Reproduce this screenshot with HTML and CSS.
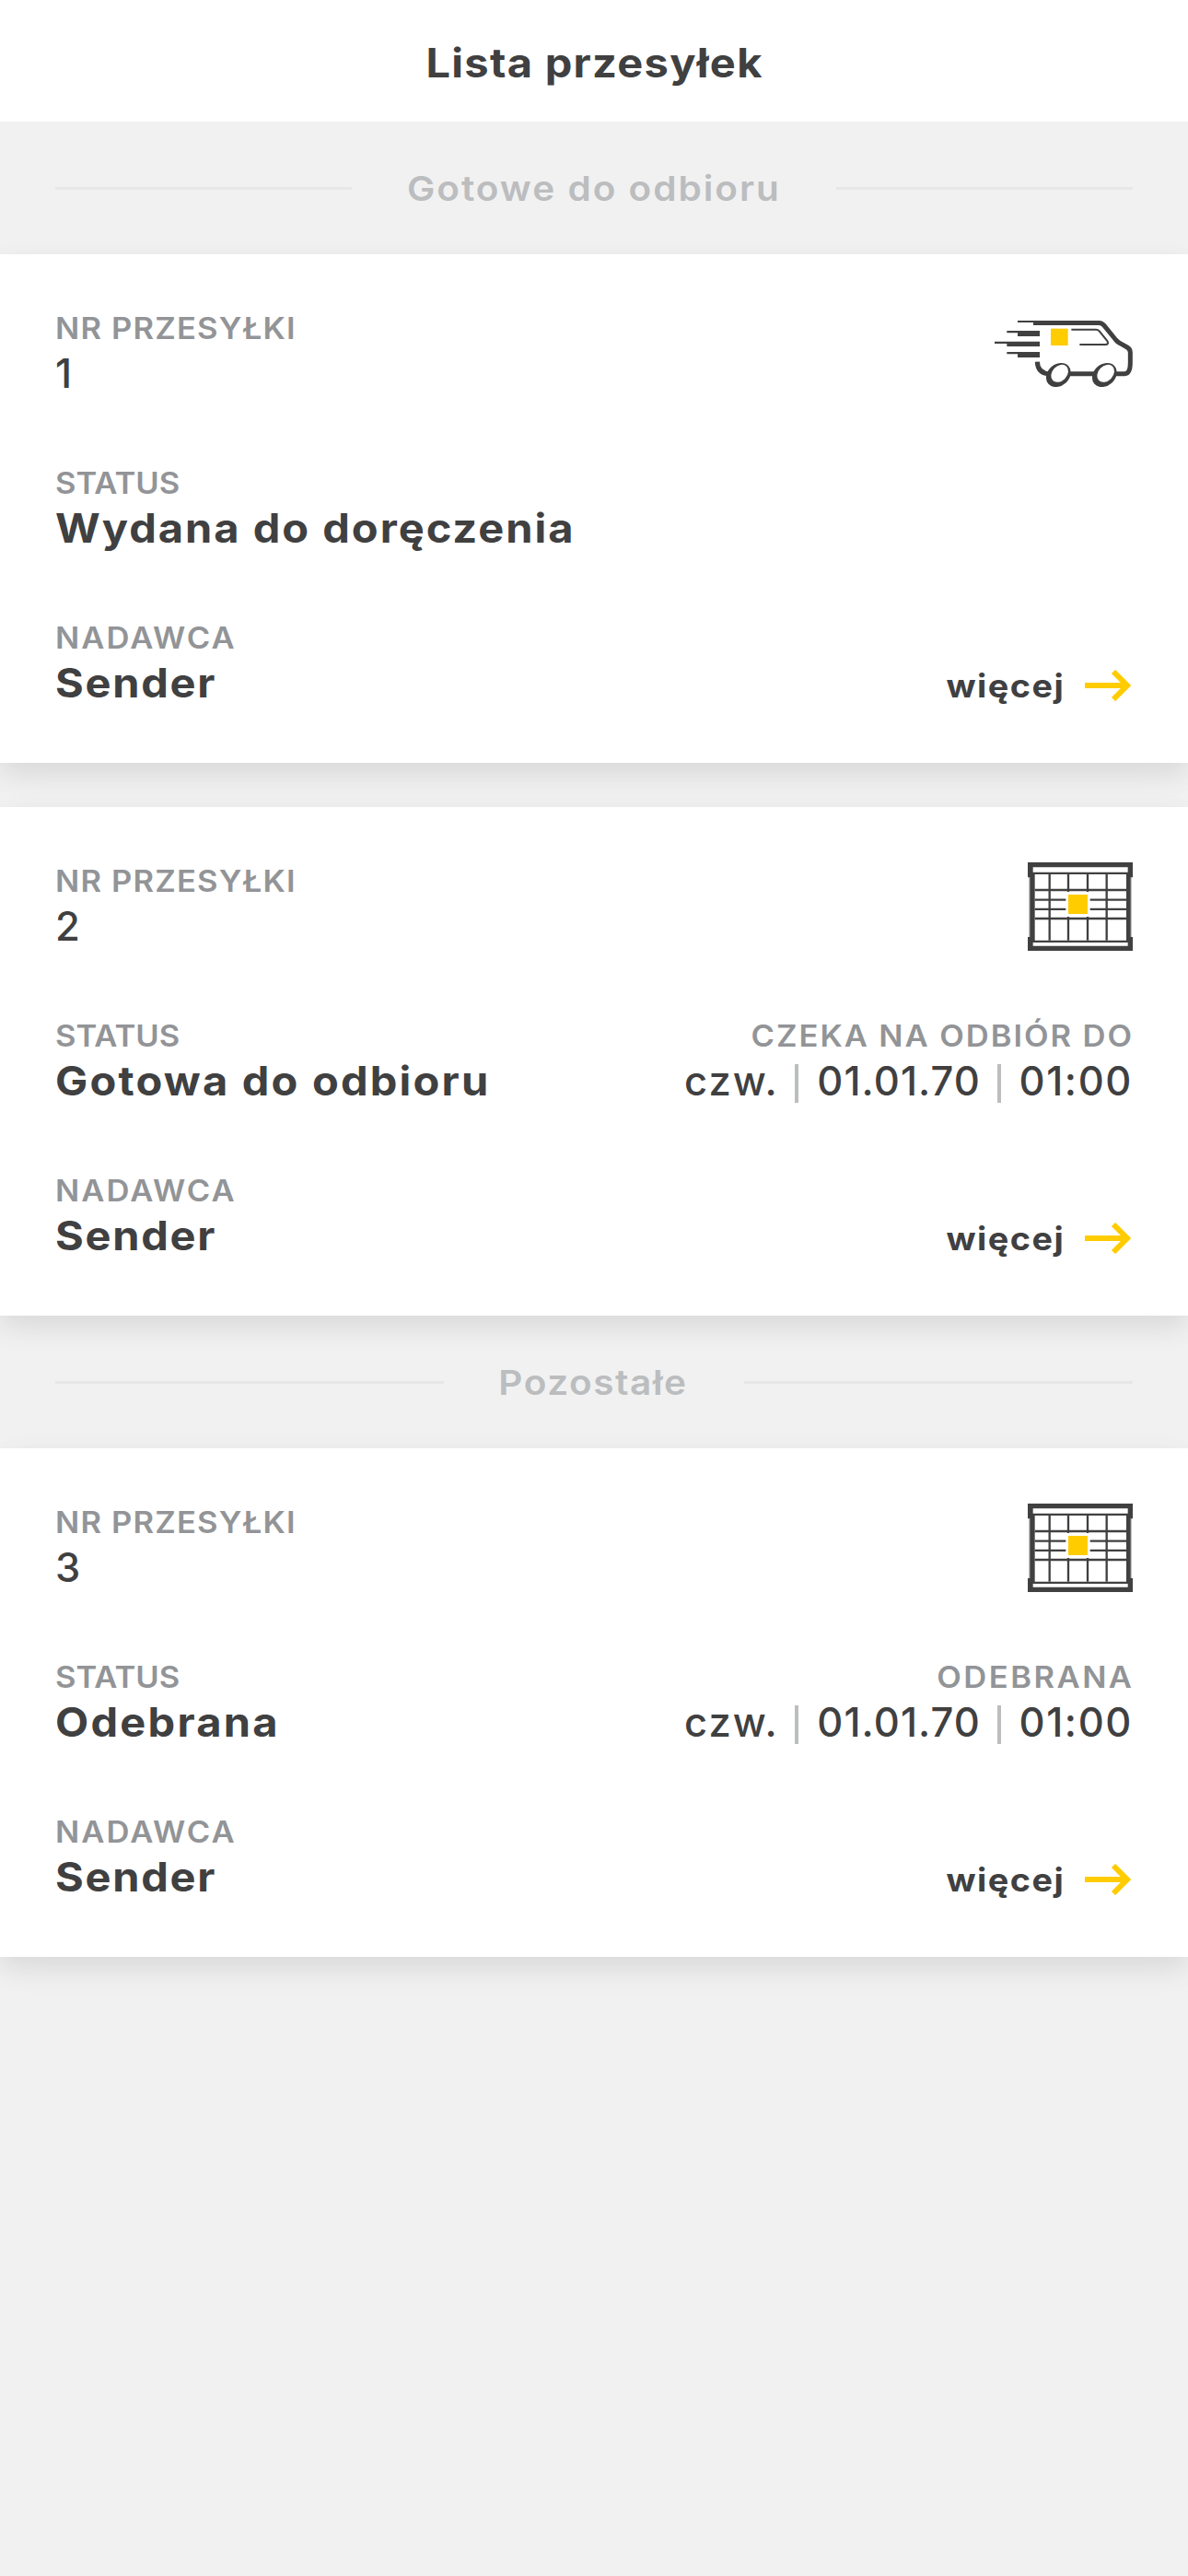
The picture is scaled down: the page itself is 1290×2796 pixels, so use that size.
FILE: index.html
```
<!DOCTYPE html>
<html lang="pl">
<head>
<meta charset="utf-8">
<title>Lista przesyłek</title>
<link rel="stylesheet" href="styles.css">
</head>
<body>
<svg class="sprite" aria-hidden="true">
  <symbol id="locker" viewBox="78 48 342 288">
    <path fill="#c4c4c5" d="M81 97h336v194H81z"/>
    <path fill="#404041" d="M78 48h342v49h-7v194h7v45H78v-45h7V97h-7z"/>
    <path fill="#fff" d="M95 64h309v16H95zM101 87h298v215H101zM95 309h309v11H95z"/>
    <path fill="none" stroke="#404041" stroke-width="7" d="M101 138h298M101 231h298M101 170h101M281 170h118M101 200.500h101M281 200.500h118M149 87v215M335 87v215M210 87v57M273 87v57M210 225v77M273 225v77"/>
    <path fill="#fc0" d="M210 153h63v63h-63z"/>
  </symbol>
  <symbol id="arrow" viewBox="534 81 150 102">
    <path fill="none" stroke="#fc0" stroke-width="18" d="M534 132h138M627 87l45 45-45 45"/>
  </symbol>
</svg>
<header class="topbar"><h1>Lista przesyłek</h1></header>
<main>
  <div class="section"><h2 class="ready">Gotowe do odbioru</h2></div>

  <article class="card">
    <div class="row">
      <div><div class="label number">NR PRZESYŁKI</div><div class="value plain">1</div></div>
      <svg class="van" viewBox="60 54 450 216">
        <g fill="#404041">
          <path d="M135 54h60v6h-60zM100 87h107v18h-72v-11h-35zM60 122h147v16H100v-9H60zM100 156h107v18h-72v-11h-35z"/>
          <ellipse cx="268" cy="231" rx="44" ry="35" transform="rotate(-42 268 231)"/>
          <ellipse cx="418" cy="231" rx="44" ry="35" transform="rotate(-42 418 231)"/>
        </g>
        <g fill="none" stroke="#404041">
          <path stroke-width="15" d="M186 61.500H400Q410 62 417 70L455 117Q461 124 469 128L492 141Q502 147 502 158V190Q502 227 484 227H452M199 188Q200 226 240 228M300 227h90"/>
          <path stroke-width="6" d="M310 83h80q7 0 11 5l26 32q6 12-6 12h-84"/>
        </g>
        <g fill="#fff">
          <ellipse cx="272" cy="226" rx="32" ry="24" transform="rotate(-46 272 226)"/>
          <ellipse cx="422" cy="226" rx="32" ry="24" transform="rotate(-46 422 226)"/>
        </g>
        <path fill="#fc0" d="M243 80h56v55h-56z"/>
      </svg>
    </div>
    <div class="row">
      <div><div class="label status">STATUS</div><div class="value out">Wydana do doręczenia</div></div>
    </div>
    <div class="row">
      <div><div class="label sender">NADAWCA</div><div class="value name">Sender</div></div>
      <a class="more"><span>więcej</span><svg><use href="#arrow"/></svg></a>
    </div>
  </article>

  <article class="card">
    <div class="row">
      <div><div class="label number">NR PRZESYŁKI</div><div class="value plain">2</div></div>
      <svg class="locker"><use href="#locker"/></svg>
    </div>
    <div class="row">
      <div><div class="label status">STATUS</div><div class="value pickup">Gotowa do odbioru</div></div>
      <div class="end">
        <div class="label until">CZEKA NA ODBIÓR DO</div>
        <div class="value when"><span class="day">czw.</span><i></i><span class="date">01.01.70</span><i></i><span class="time">01:00</span></div>
      </div>
    </div>
    <div class="row">
      <div><div class="label sender">NADAWCA</div><div class="value name">Sender</div></div>
      <a class="more"><span>więcej</span><svg><use href="#arrow"/></svg></a>
    </div>
  </article>

  <div class="section"><h2 class="rest">Pozostałe</h2></div>

  <article class="card">
    <div class="row">
      <div><div class="label number">NR PRZESYŁKI</div><div class="value plain">3</div></div>
      <svg class="locker"><use href="#locker"/></svg>
    </div>
    <div class="row">
      <div><div class="label status">STATUS</div><div class="value received">Odebrana</div></div>
      <div class="end">
        <div class="label taken">ODEBRANA</div>
        <div class="value when"><span class="day">czw.</span><i></i><span class="date">01.01.70</span><i></i><span class="time">01:00</span></div>
      </div>
    </div>
    <div class="row">
      <div><div class="label sender">NADAWCA</div><div class="value name">Sender</div></div>
      <a class="more"><span>więcej</span><svg><use href="#arrow"/></svg></a>
    </div>
  </article>
</main>
</body>
</html>
```
FILE: styles.css
```
* { box-sizing: border-box; margin: 0; }
body {
  min-height: 2796px;
  background: #f1f1f1;
  color: #404041;
  font-family: Inter, "Noto Sans", sans-serif;
  white-space: nowrap;
  overflow-x: hidden;
}
svg { display: block; flex: none; }
.sprite { display: none; }

/* Widened letterforms for headings, labels and values */
h1, h2, .label, .value, .more span { transform: scaleX(1.08); }
.label, .value { transform-origin: left; }
.end .label, .more span { transform-origin: right; }
.value.plain, .value.when { transform: none; }

.topbar {
  height: 132px;
  padding-top: 4px;
  background: #fff;
  display: flex;
  align-items: center;
  justify-content: center;
}
h1 { font-size: 43.5px; font-weight: 700; letter-spacing: 1.2px; margin-right: -1px; }

.section {
  height: 144px;
  padding: 1px 60px 0;
  display: flex;
  align-items: center;
}
.section::before, .section::after {
  content: "";
  flex: 1;
  height: 3px;
  background: #e7e7e8;
}
h2 { font-size: 37.5px; font-weight: 600; color: #bbbdbf; }
.ready { letter-spacing: 1.85px; padding: 0 76px 0 75px; }
.rest { letter-spacing: 1.45px; padding: 0 69px 0 67px; }

.card {
  height: 552px;
  padding: 60px;
  background: #fff;
  display: flex;
  flex-direction: column;
  gap: 71px;
  box-shadow: 0 12px 26px rgba(0, 0, 0, .075), 0 12px 45px rgba(0, 0, 0, .035);
}
.card + .card { margin-top: 48px; }
.row {
  height: 97px;
  display: flex;
  justify-content: space-between;
}
.label {
  font-size: 32px;
  line-height: 41px;
  font-weight: 600;
  color: #929497;
}
.value { font-size: 43.5px; line-height: 56px; font-weight: 700; }
.plain { font-weight: 500; }

.number { letter-spacing: 1.1px; }
.status { letter-spacing: 0; }
.sender { letter-spacing: 1.9px; }
.until { letter-spacing: 1.8px; margin-right: -1px; }
.taken { letter-spacing: 2.3px; margin-right: -1.5px; }
.out { letter-spacing: 1.85px; }
.pickup { letter-spacing: 2.05px; }
.name { letter-spacing: 1.6px; }
.received { letter-spacing: 2.1px; }

.end { text-align: right; }
.when { display: flex; justify-content: flex-end; font-weight: 500; }
.when i {
  width: 4px;
  height: 42px;
  margin: 10px 20px 0 17.5px;
  background: #bbbdbf;
}
.day { letter-spacing: 2px; }
.date { letter-spacing: 1.1px; }
.time { letter-spacing: 1.6px; }

.van { width: 150px; height: 72px; margin-top: 12px; }
.locker { width: 114px; height: 96px; }

.more {
  display: flex;
  gap: 22px;
  margin-right: 2px;
  padding-top: 55px;
  font-size: 35px;
  font-weight: 700;
  line-height: 35px;
  letter-spacing: 1.35px;
}
.more svg { width: 50px; height: 34px; }
```
